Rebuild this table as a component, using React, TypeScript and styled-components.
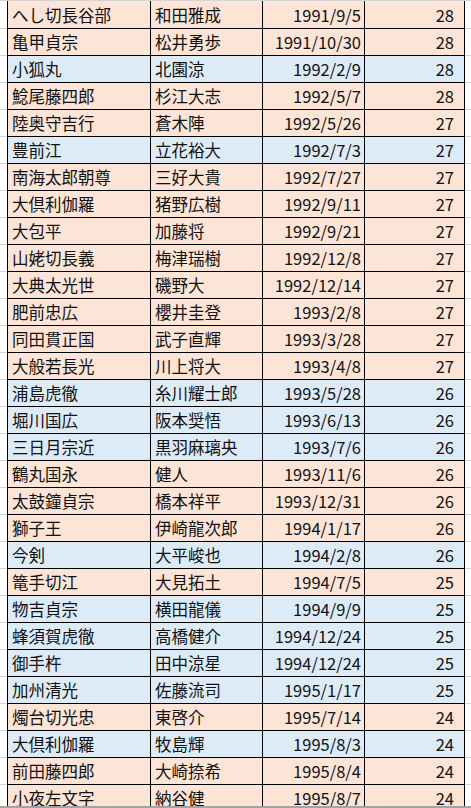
import React from "react";
import styled, { createGlobalStyle } from "styled-components";

const Global = createGlobalStyle`
  html, body { margin: 0; padding: 0; background: #ffffff; }
  body { font-family: "Noto Sans CJK JP", "Noto Sans", sans-serif; }
`;

type Tone = "pink" | "blue";

const rows: [string, string, string, number, Tone][] = [
  ["へし切長谷部", "和田雅成", "1991/9/5", 28, "pink"],
  ["亀甲貞宗", "松井勇歩", "1991/10/30", 28, "pink"],
  ["小狐丸", "北園涼", "1992/2/9", 28, "blue"],
  ["鯰尾藤四郎", "杉江大志", "1992/5/7", 28, "pink"],
  ["陸奥守吉行", "蒼木陣", "1992/5/26", 27, "pink"],
  ["豊前江", "立花裕大", "1992/7/3", 27, "blue"],
  ["南海太郎朝尊", "三好大貴", "1992/7/27", 27, "pink"],
  ["大倶利伽羅", "猪野広樹", "1992/9/11", 27, "pink"],
  ["大包平", "加藤将", "1992/9/21", 27, "pink"],
  ["山姥切長義", "梅津瑞樹", "1992/12/8", 27, "pink"],
  ["大典太光世", "磯野大", "1992/12/14", 27, "pink"],
  ["肥前忠広", "櫻井圭登", "1993/2/8", 27, "pink"],
  ["同田貫正国", "武子直輝", "1993/3/28", 27, "pink"],
  ["大般若長光", "川上将大", "1993/4/8", 27, "pink"],
  ["浦島虎徹", "糸川耀士郎", "1993/5/28", 26, "blue"],
  ["堀川国広", "阪本奨悟", "1993/6/13", 26, "blue"],
  ["三日月宗近", "黒羽麻璃央", "1993/7/6", 26, "blue"],
  ["鶴丸国永", "健人", "1993/11/6", 26, "pink"],
  ["太鼓鐘貞宗", "橋本祥平", "1993/12/31", 26, "pink"],
  ["獅子王", "伊崎龍次郎", "1994/1/17", 26, "pink"],
  ["今剣", "大平峻也", "1994/2/8", 26, "blue"],
  ["篭手切江", "大見拓土", "1994/7/5", 25, "pink"],
  ["物吉貞宗", "横田龍儀", "1994/9/9", 25, "blue"],
  ["蜂須賀虎徹", "高橋健介", "1994/12/24", 25, "blue"],
  ["御手杵", "田中涼星", "1994/12/24", 25, "blue"],
  ["加州清光", "佐藤流司", "1995/1/17", 25, "blue"],
  ["燭台切光忠", "東啓介", "1995/7/14", 24, "pink"],
  ["大倶利伽羅", "牧島輝", "1995/8/3", 24, "blue"],
  ["前田藤四郎", "大崎捺希", "1995/8/4", 24, "pink"],
  ["小夜左文字", "納谷健", "1995/8/7", 24, "pink"],
];

const toneColor: Record<Tone, string> = {
  pink: "#fce4d6",
  blue: "#ddebf7",
};

const Sheet = styled.div`
  width: 471px;
  height: 808px;
  box-sizing: border-box;
  border-top: 1px solid #d4d4d4;
  border-bottom: 2px solid #a3a3a3;
  overflow: hidden;
  display: flex;
  flex-direction: column;
`;

const Row = styled.div<{ $first: boolean }>`
  display: grid;
  grid-template-columns: 7px 144px 112px 102px 100px 1fr;
  height: ${(p) => (p.$first ? 28 : 27)}px;
  flex: none;
`;

const Gutter = styled.div`
  border-bottom: 1px solid #d4d4d4;
`;

const Cell = styled.div<{ $tone: Tone; $align: "left" | "right"; $lead?: boolean; $padR?: number }>`
  background: ${(p) => toneColor[p.$tone]};
  border-bottom: 1px solid #000;
  border-right: 1px solid #000;
  border-left: ${(p) => (p.$lead ? "1px solid #000" : "none")};
  display: flex;
  align-items: center;
  justify-content: ${(p) => (p.$align === "left" ? "flex-start" : "flex-end")};
  padding: 0 ${(p) => p.$padR ?? 3}px 0 4px;
  font-size: 16.5px;
  line-height: 1;
  color: #111;
  white-space: nowrap;
  overflow: hidden;
  padding-top: 1px;
`;

export default function App() {
  return (
    <>
      <Global />
      <Sheet>
        {rows.map(([sword, actor, date, age, tone], i) => (
          <Row key={i} $first={i === 0}>
            <Gutter />
            <Cell $tone={tone} $align="left" $lead>
              {sword}
            </Cell>
            <Cell $tone={tone} $align="left">
              {actor}
            </Cell>
            <Cell $tone={tone} $align="right" $padR={3}>
              {date}
            </Cell>
            <Cell $tone={tone} $align="right" $padR={10}>
              {age}
            </Cell>
            <Gutter />
          </Row>
        ))}
      </Sheet>
    </>
  );
}
